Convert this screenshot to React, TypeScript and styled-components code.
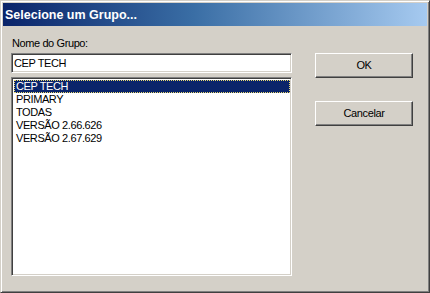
import React from "react";
import styled, { createGlobalStyle } from "styled-components";

const Global = createGlobalStyle`
  html, body { margin: 0; padding: 0; background: #d4d0c8; }
  body { font-family: "Liberation Sans", Arial, sans-serif; }
  * { box-sizing: border-box; }
`;

const Window = styled.div`
  width: 430px;
  height: 293px;
  background: #d4d0c8;
  border-top: 1px solid #d4d0c8;
  border-left: 1px solid #d4d0c8;
  border-right: 1px solid #404040;
  border-bottom: 1px solid #404040;
  box-shadow: inset 1px 1px #ffffff, inset -1px -1px #808080;
  padding: 2px;
  display: flex;
  flex-direction: column;
`;

const TitleBar = styled.div`
  height: 23px;
  background: linear-gradient(to right, #0a246a 0%, #3a6ea5 45%, #a6caf0 100%);
  color: #ffffff;
  font-weight: bold;
  font-size: 12.5px;
  line-height: 23px;
  padding-left: 2px;
  padding-top: 1px;
  white-space: nowrap;
`;

const Body = styled.div`
  flex: 1;
  display: flex;
  padding: 11px 0 0 8px;
  font-size: 11px;
  letter-spacing: -0.4px;
  color: #000;
`;

const LeftColumn = styled.div`
  width: 281px;
  display: flex;
  flex-direction: column;
`;

const Label = styled.div`
  height: 13px;
  line-height: 13px;
  padding-left: 1px;
`;

const sunken = `
  border-top: 1px solid #808080;
  border-left: 1px solid #808080;
  border-right: 1px solid #ffffff;
  border-bottom: 1px solid #ffffff;
  box-shadow: inset 1px 1px #404040, inset -1px -1px #d4d0c8;
  background: #ffffff;
`;

const TextInput = styled.div`
  ${sunken}
  margin-top: 3px;
  height: 20px;
  padding: 1px 2px;
  line-height: 16px;
  white-space: nowrap;
`;

const ListBox = styled.div`
  ${sunken}
  margin-top: 4px;
  height: 199px;
  padding: 2px 1px 2px 2px;
  display: flex;
  flex-direction: column;
`;

const ListItem = styled.div<{ $selected?: boolean }>`
  height: 13px;
  line-height: 13px;
  padding-left: 2px;
  white-space: nowrap;
  background: ${(p) => (p.$selected ? "#0a246a" : "transparent")};
  color: ${(p) => (p.$selected ? "#ffffff" : "#000000")};
  outline: ${(p) => (p.$selected ? "1px dotted #e8d870" : "none")};
  outline-offset: -1px;
`;

const RightColumn = styled.div`
  margin-left: 23px;
  margin-top: 16px;
  display: flex;
  flex-direction: column;
  gap: 23px;
`;

const Button = styled.div`
  width: 98px;
  height: 25px;
  border-top: 1px solid #ffffff;
  border-left: 1px solid #ffffff;
  border-right: 1px solid #404040;
  border-bottom: 1px solid #404040;
  box-shadow: inset -1px -1px #808080;
  display: flex;
  align-items: center;
  justify-content: center;
  line-height: 13px;
`;

const items = ["CEP TECH", "PRIMARY", "TODAS", "VERSÃO 2.66.626", "VERSÃO 2.67.629"];

export default function App() {
  return (
    <>
      <Global />
      <Window>
        <TitleBar>Selecione um Grupo...</TitleBar>
        <Body>
          <LeftColumn>
            <Label>Nome do Grupo:</Label>
            <TextInput>CEP TECH</TextInput>
            <ListBox>
              {items.map((it, i) => (
                <ListItem key={it} $selected={i === 0}>
                  {it}
                </ListItem>
              ))}
            </ListBox>
          </LeftColumn>
          <RightColumn>
            <Button>OK</Button>
            <Button>Cancelar</Button>
          </RightColumn>
        </Body>
      </Window>
    </>
  );
}
